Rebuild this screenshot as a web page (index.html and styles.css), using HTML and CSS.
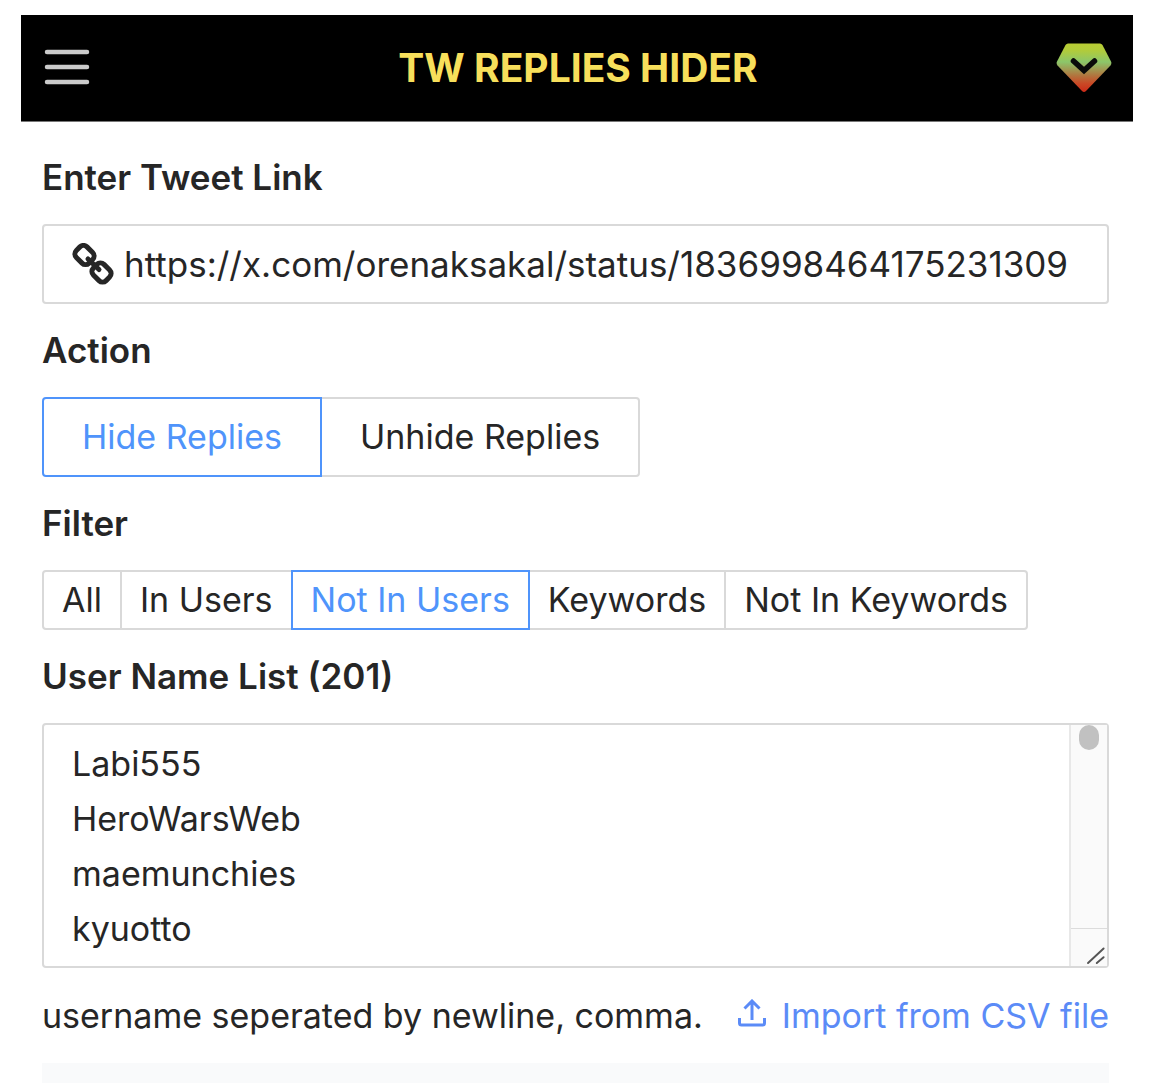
FILE: index.html
```
<!DOCTYPE html>
<html lang="en">
  <head>
    <meta charset="UTF-8" />
    <meta name="viewport" content="width=device-width, initial-scale=1.0" />
    <title>TW Replies Hider</title>
    <link rel="stylesheet" href="styles.css">
  </head>
  <body>
    <header class="header">
      <button type="button" class="icon-btn" aria-label="Menu">
        <svg width="46" height="38" viewBox="0 0 46 38" fill="none" stroke="#cbcbcb" stroke-width="4.500" stroke-linecap="round">
          <path d="M3 4H43M3 19H43M3 34H43" />
        </svg>
      </button>
      <h1 class="title">TW REPLIES HIDER</h1>
      <button type="button" class="icon-btn" aria-label="Account">
        <svg width="56" height="50" viewBox="0 0 56 50">
          <defs>
            <linearGradient id="gem" x1="0" y1="0" x2="0" y2="1">
              <stop offset="0" stop-color="#b8cc33" />
              <stop offset="0.15" stop-color="#b0cb3c" />
              <stop offset="0.38" stop-color="#8cc66a" />
              <stop offset="0.65" stop-color="#b07840" />
              <stop offset="0.82" stop-color="#c94a26" />
              <stop offset="1" stop-color="#cc2a18" />
            </linearGradient>
          </defs>
          <path d="M12 1.500H44Q45.500 1.500 46.500 3L55 19.500Q56 21.500 54.500 23.500L30 49Q28 51 26 49L1.500 23.500Q0 21.500 1 19.500L9.500 3Q10.500 1.500 12 1.500Z" fill="url(#gem)" />
          <path d="M17.500 19L28 28.500L38.500 19" fill="none" stroke="#0a0a0a" stroke-width="5.500" stroke-linecap="round" />
        </svg>
      </button>
    </header>

    <main>
      <form class="form">
        <label class="label" for="tweet-link">Enter Tweet Link</label>
        <div class="box link-box">
          <svg width="42" height="42" viewBox="0 0 42 42" fill="none" stroke="#262626" stroke-width="5">
            <rect x="3.500" y="4.500" width="18" height="15" rx="5" transform="rotate(45 12.500 12)" />
            <rect x="20.500" y="22" width="18" height="15" rx="5" transform="rotate(45 29.500 29.500)" />
            <path d="M16 16L27 26.500" stroke-linecap="round" />
          </svg>
          <input type="url" id="tweet-link" class="link-input" value="https://x.com/orenaksakal/status/1836998464175231309" />
        </div>

        <fieldset>
          <legend class="label">Action</legend>
          <div class="group group-large">
            <label class="option"><input type="radio" name="action" checked />Hide Replies</label>
            <label class="option"><input type="radio" name="action" />Unhide Replies</label>
          </div>
        </fieldset>

        <fieldset>
          <legend class="label">Filter</legend>
          <div class="group">
            <label class="option"><input type="radio" name="filter" />All</label>
            <label class="option"><input type="radio" name="filter" />In Users</label>
            <label class="option"><input type="radio" name="filter" checked />Not In Users</label>
            <label class="option"><input type="radio" name="filter" />Keywords</label>
            <label class="option"><input type="radio" name="filter" />Not In Keywords</label>
          </div>
        </fieldset>

        <label class="label" for="user-list">User Name List (201)</label>
        <div class="box list-box">
          <textarea id="user-list" rows="4" spellcheck="false">Labi555
HeroWarsWeb
maemunchies
kyuotto</textarea>
          <div class="scrollbar">
            <div class="track"><div class="thumb"></div></div>
            <svg class="resizer" width="36" height="38" viewBox="0 0 36 38" fill="none" stroke="#555" stroke-width="2" stroke-linecap="round">
              <path d="M17 35L33 20M26 35L33 29" />
            </svg>
          </div>
        </div>

        <div class="hint">
          <span>username seperated by newline, comma.</span>
          <a href="#" class="import">
            <svg width="28" height="34" viewBox="0 0 28 34" fill="none" stroke="#5b8bf7" stroke-width="3">
              <path d="M14 21V3M6.500 9.500L14 2L21.500 9.500M1.500 19V24Q1.500 26 3.500 26H24.500Q26.500 26 26.500 24V19" />
            </svg>
            Import from CSV file
          </a>
        </div>
      </form>
      <div class="panel"></div>
    </main>
  </body>
</html>
```
FILE: styles.css
```
* {
  box-sizing: border-box;
}

:root {
  --text-color: #262626;
  --border-color: #d9d9d9;
  --active-color: #4f94fb;
  --link-color: #5b8bf7;
}

body {
  margin: 15px 27px 0 21px;
  background: #fff;
  color: var(--text-color);
  font-family: Inter, "Liberation Sans", sans-serif;
  font-size: 34px;
  line-height: 55px;
}

input,
textarea {
  font: inherit;
  color: inherit;
}

.header {
  display: grid;
  grid-template-columns: 1fr auto 1fr;
  align-items: center;
  height: 107px;
  padding: 0 21px 2px 23px;
  background: #000;
  border-bottom: 1px solid #777;
}

.icon-btn {
  display: flex;
  padding: 0;
  border: none;
  background: none;
  cursor: pointer;
}

.icon-btn:last-child {
  justify-self: end;
}

.title {
  margin: 0;
  color: #f7df5b;
  font-size: 39px;
  font-weight: 700;
}

main {
  padding: 9px 24px 0 21px;
}

.label {
  display: block;
  padding: 19px 0;
  font-size: 35px;
  font-weight: 600;
}

fieldset {
  margin: 0;
  padding: 0;
  border: none;
}

legend {
  padding: 0;
}

.box {
  display: flex;
  border: 2px solid var(--border-color);
  border-radius: 4px;
}

.link-box {
  align-items: center;
  gap: 10px;
  height: 80px;
  padding: 0 28px;
}

.link-box svg {
  flex: none;
}

.link-input {
  flex: 1;
  min-width: 0;
  padding: 0;
  border: none;
  outline: none;
  background: none;
  font-size: 35px;
}

.group {
  display: flex;
}

.option {
  position: relative;
  margin-left: -2px;
  padding: 0 18px;
  border: 2px solid var(--border-color);
  line-height: 56px;
  white-space: nowrap;
  cursor: pointer;
}

.group-large .option {
  padding: 0 38px;
  line-height: 76px;
}

.option:first-child {
  margin-left: 0;
  border-radius: 4px 0 0 4px;
}

.option:last-child {
  border-radius: 0 4px 4px 0;
}

.option:has(input:checked) {
  z-index: 1;
  border-color: var(--active-color);
  color: var(--active-color);
}

.option input {
  position: absolute;
  margin: 0;
  opacity: 0;
  pointer-events: none;
}

.list-box {
  height: 245px;
}

textarea {
  flex: 1;
  min-width: 0;
  padding: 11px 28px;
  border: none;
  outline: none;
  background: none;
  resize: none;
  overflow: hidden;
}

.scrollbar {
  display: flex;
  flex-direction: column;
  width: 38px;
  border-left: 2px solid #e8e8e8;
  background: #fafafa;
}

.track {
  flex: 1;
  padding: 0 8px;
}

.thumb {
  width: 20px;
  height: 25px;
  border-radius: 10px;
  background: #c1c1c1;
}

.resizer {
  border-top: 1px solid #dcdcdc;
}

.hint {
  display: flex;
  align-items: center;
  justify-content: space-between;
  padding: 20px 0;
}

.import {
  display: flex;
  align-items: center;
  gap: 16px;
  color: var(--link-color);
  text-decoration: none;
}

.panel {
  height: 20px;
  background: #f9fafb;
}
```
